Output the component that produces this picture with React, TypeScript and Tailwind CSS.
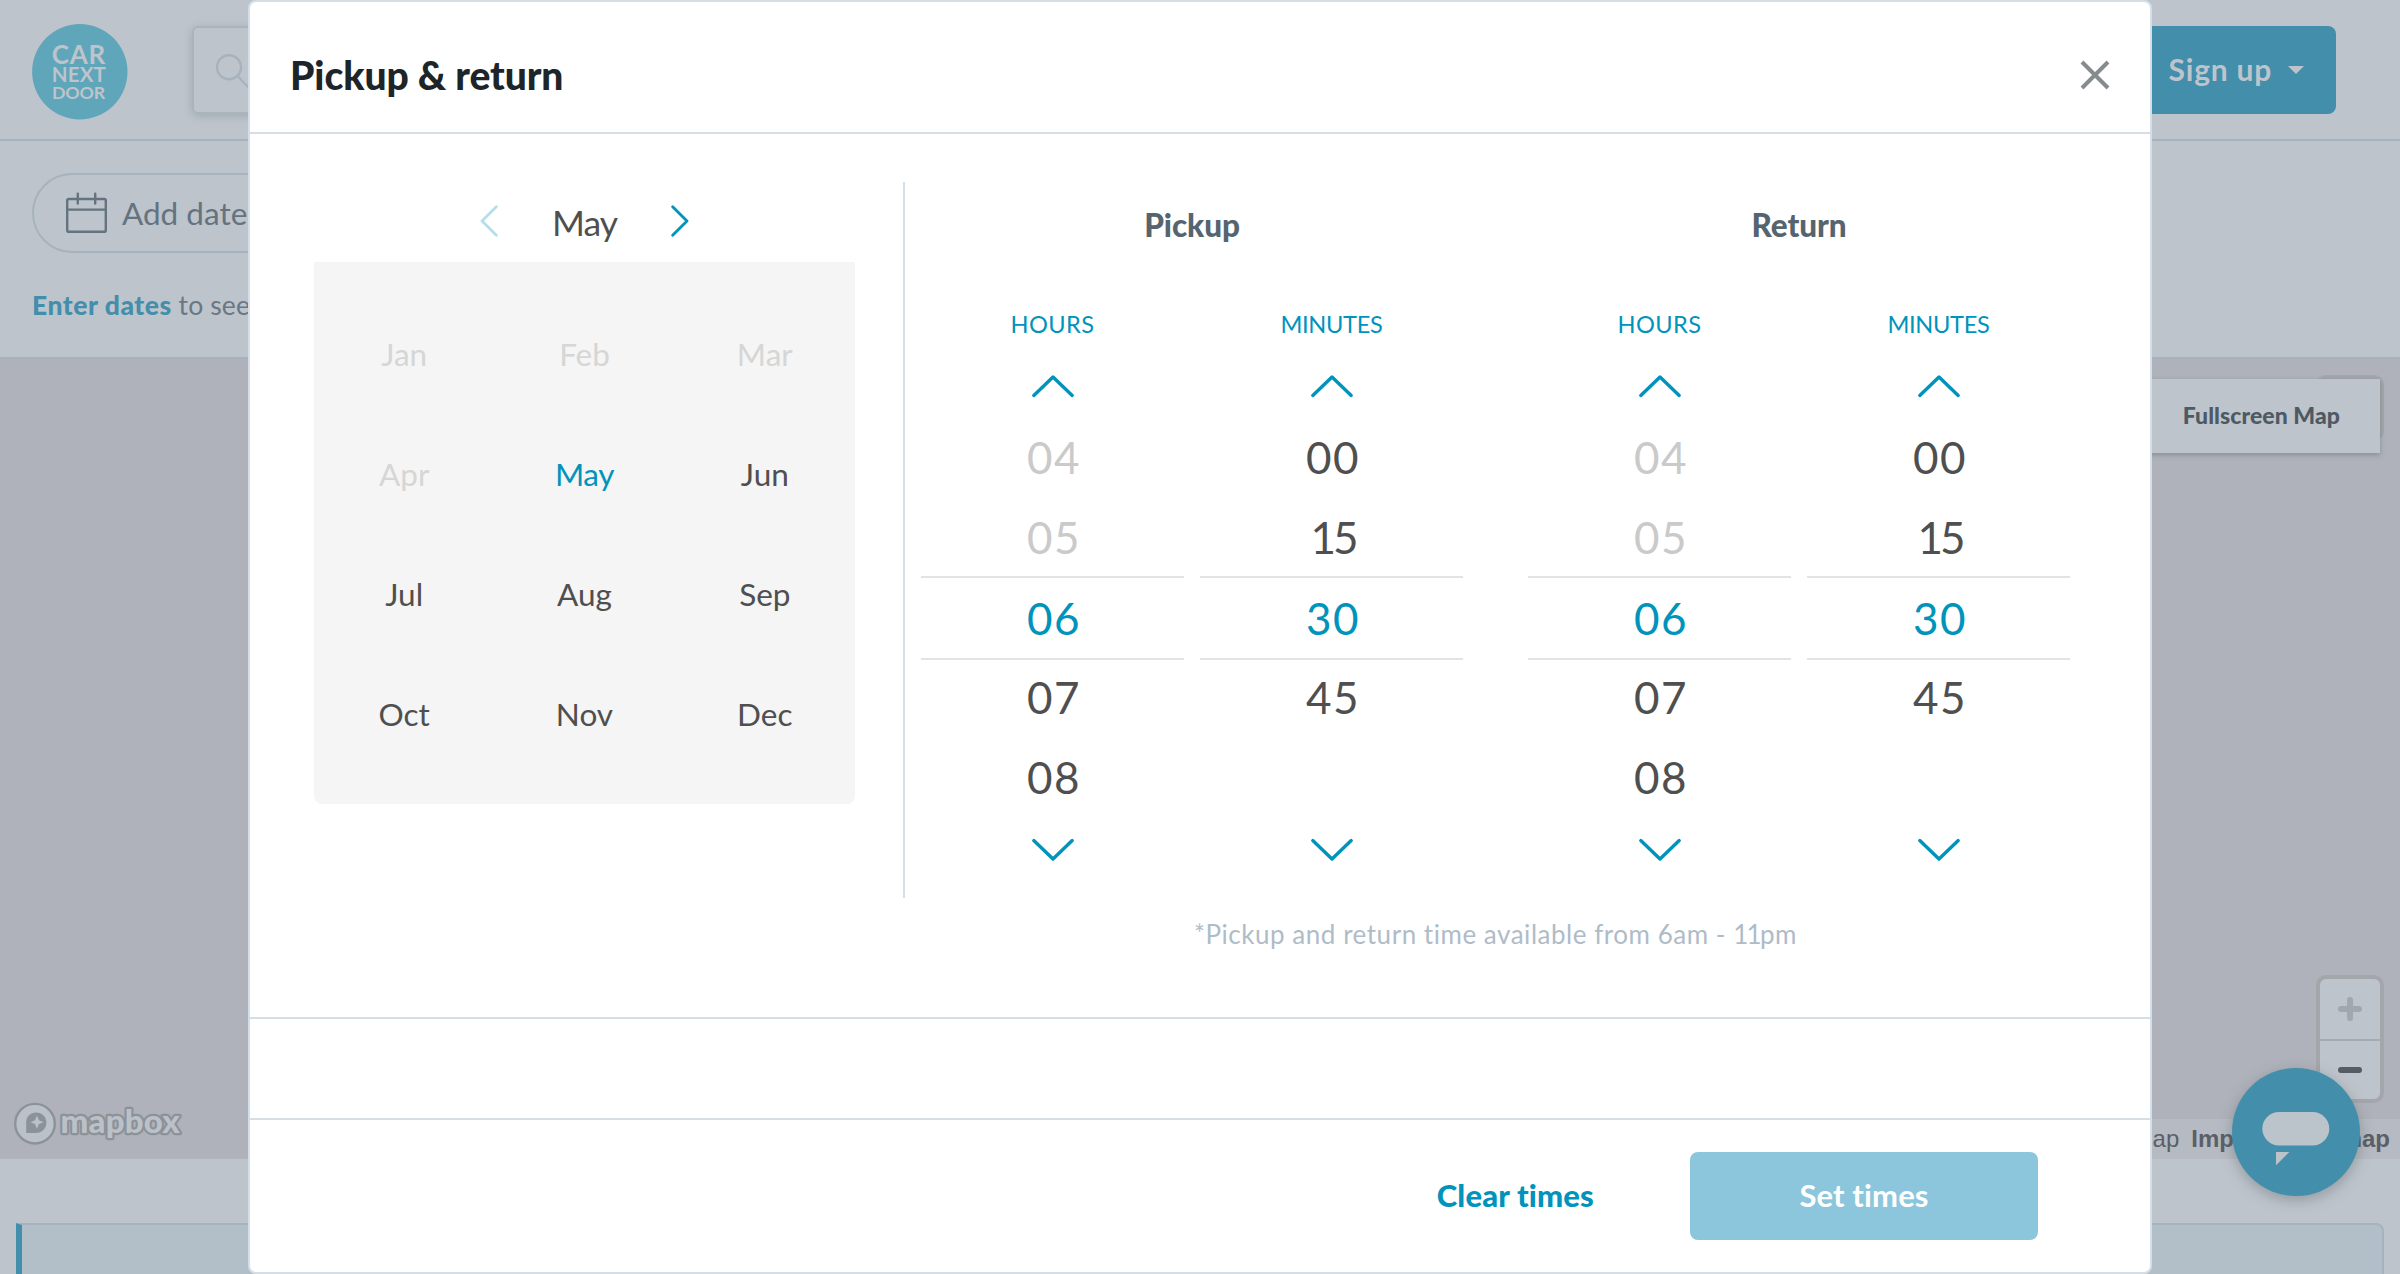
import React from "react";

const MONTHS = ["Jan", "Feb", "Mar", "Apr", "May", "Jun", "Jul", "Aug", "Sep", "Oct", "Nov", "Dec"];
const CURRENT_MONTH = 4;

function Logo() {
  return (
    <svg className="mt-6 h-24 w-24 shrink-0" viewBox="0 0 96 96" fontFamily="Lato, sans-serif" fontWeight="700" fill="#bec4cb">
      <circle cx="47.8" cy="47.8" r="47.7" fill="#5fa6bb" />
      <text x="19.8" y="40" fontSize="26" letterSpacing="0.77">CAR</text>
      <text x="19.8" y="58.4" fontSize="20.5" letterSpacing="0.16">NEXT</text>
      <text x="20" y="75" fontSize="17.8" letterSpacing="-0.2">DOOR</text>
    </svg>
  );
}

function SiteHeader() {
  return (
    <header className="flex h-[141px] items-start border-b-2 border-[#a6b2bd] pr-16 pl-8">
      <Logo />
      <div className="mt-[26px] ml-16 flex h-[88px] w-[900px] rounded-md border-2 border-[#a9b4bf] pt-[26px] pl-[22px] shadow-[0_2px_8px_rgba(90,105,120,0.3)]">
        <svg className="h-9 w-9" viewBox="0 0 36 36" fill="none" stroke="#a6b2bd" strokeWidth="2.4" strokeLinecap="round">
          <circle cx="13" cy="13.2" r="12" />
          <path d="M21.5 22 33 34" />
        </svg>
      </div>
      <button className="mt-[26px] ml-auto flex h-[88px] items-center rounded-lg bg-[#428eab] pr-8 pb-0.5 pl-16 text-[30px] font-bold tracking-[0.77px] text-[#bec4cb]">
        Sign up
        <svg className="mt-0.5 ml-4 h-2 w-4" viewBox="0 0 16 8" fill="currentColor">
          <path d="M0 0h16L8 8z" />
        </svg>
      </button>
    </header>
  );
}

function Filters() {
  return (
    <section className="h-[218px] border-b-2 border-[#a6b2bd] pt-8 pl-8">
      <div className="flex h-20 w-[320px] items-center rounded-full border-2 border-[#a6b2bd] pl-8 text-[31.5px] leading-[40px] text-[#64737f]">
        <svg className="h-[42px] w-[42px]" viewBox="0 0 42 42" fill="none" stroke="currentColor" strokeWidth="2.4" strokeLinecap="round">
          <rect x="1.2" y="7" width="38.6" height="32.8" rx="1.6" />
          <path d="M1.2 17.6h38.6M11.8 1.6v10M29.2 1.6v10" />
        </svg>
        <span className="ml-[14px] whitespace-nowrap">Add dates</span>
      </div>
      <p className="mt-8 text-[26.5px] leading-[40px] tracking-[0.12px] text-[#697884]">
        <span className="font-black tracking-[0.52px] text-[#428eab]">Enter dates</span> to see availability
      </p>
    </section>
  );
}

function MapArea() {
  return (
    <section className="relative h-[800px] bg-[#afb2ba]">
      <div className="absolute top-4 right-4 h-[66px] w-[68px] rounded-[10px] bg-[#a3a7ac]" />
      <button className="absolute top-5 right-5 flex h-[74px] w-[300px] items-center justify-end bg-[#bec4cb] pr-10 pb-0.5 text-[23px] font-black tracking-[0.06px] text-[#4e5963] shadow-[0_2px_5px_rgba(80,90,95,0.4)]">
        Fullscreen Map
      </button>
      <div className="absolute top-[616px] right-4 flex h-32 w-[68px] flex-col rounded-[10px] border-4 border-[#a3a7ac] bg-[#bec4cb]">
        <div className="flex h-[62px] items-center justify-center border-b-2 border-[#a6abb2]">
          <svg className="h-6 w-6" viewBox="0 0 24 24" stroke="#a1a7ad" strokeWidth="6" strokeLinecap="round">
            <path d="M12 3v18M3 12h18" />
          </svg>
        </div>
        <div className="flex h-[58px] items-center justify-center">
          <div className="h-1.5 w-6 rounded-full bg-[#545c64]" />
        </div>
      </div>
      <svg className="absolute top-[740px] left-3.5 h-12 w-[172px]" viewBox="0 0 172 48">
        <circle cx="21" cy="24.7" r="19.8" fill="#bbc1c9" stroke="#8d9198" strokeWidth="2.4" />
        <path d="M12.2 34V23.2c0-6 4.4-9.8 10-9.8s10.2 4.4 10.2 10c0 6-4.6 10.5-10.6 10.5z" fill="#8d9198" />
        <path d="m23 16.6 1.9 4.6 4.7 2-4.7 1.900-1.900 4.700-2-4.700-4.600-1.900 4.600-2z" fill="#bbc1c9" />
        <text
          x="46.5"
          y="33.6"
          fontFamily="Lato, sans-serif"
          fontSize="33"
          fontWeight="900"
          letterSpacing="0.2"
          fill="#bbc1c9"
          stroke="#8d9198"
          strokeWidth="4.4"
          strokeLinejoin="round"
          paintOrder="stroke"
        >
          mapbox
        </text>
      </svg>
      <div className="absolute right-0 bottom-0 flex h-10 items-center gap-3 bg-[#b6bac2] pr-[10px] pl-3 font-['Liberation_Sans',Arial,sans-serif] text-2xl whitespace-nowrap text-[#5b5f67]">
        <span>© Mapbox</span>
        <span>© OpenStreetMap</span>
        <span className="font-bold">Improve this map</span>
      </div>
    </section>
  );
}

function ChatButton() {
  return (
    <button className="absolute top-[1068px] left-[2232px] h-32 w-32 rounded-full bg-[#438fab] shadow-[0_4px_14px_rgba(80,90,95,0.4)]">
      <svg className="h-32 w-32" viewBox="0 0 128 128" fill="#bcc4cb">
        <rect x="30.3" y="44" width="67" height="33.4" rx="16.7" />
        <path d="M44 84h13.3L44 97.3z" />
      </svg>
    </button>
  );
}

type Direction = "up" | "down";

function Arrow({ dir }: { dir: Direction }) {
  return (
    <button className="flex h-10 items-center justify-center">
      <svg className="h-6 w-[44px]" viewBox="0 0 44 24" fill="none" stroke="#0093bb" strokeWidth="3.4" strokeLinecap="round" strokeLinejoin="round">
        <path d={dir === "up" ? "M2.8 21.4 22 3l19.2 18.4" : "M2.8 2.6 22 21 41.2 2.6"} />
      </svg>
    </button>
  );
}

type Tone = "off" | "on" | "picked";
type Slot = { label: string; tone: Tone };

const HOURS: Slot[] = [
  { label: "04", tone: "off" },
  { label: "05", tone: "off" },
  { label: "06", tone: "picked" },
  { label: "07", tone: "on" },
  { label: "08", tone: "on" },
];

const MINUTES: Slot[] = [
  { label: "00", tone: "on" },
  { label: "15", tone: "on" },
  { label: "30", tone: "picked" },
  { label: "45", tone: "on" },
];

const SLOT_CLASS: Record<Tone, string> = {
  off: "h-20 pt-0.5 text-[#cacaca]",
  on: "h-20 pt-0.5 text-[#4f4f4f]",
  picked: "-mb-1 h-[84px] border-y-2 border-[#e3e3e3] pb-px text-[#0093bb]",
};

function Wheel({ title, slots }: { title: string; slots: Slot[] }) {
  return (
    <div className="flex w-[263px] flex-col">
      <div
        className={`text-center text-[23.6px] leading-[40px] text-[#0093bb] ${
          title === "HOURS" ? "tracking-[0.44px]" : "tracking-[-0.31px]"
        }`}
      >
        {title}
      </div>
      <div className="mt-[22px] flex flex-col">
        <Arrow dir="up" />
      </div>
      <ul className="mt-[10px] h-[400px]">
        {slots.map((s) => (
          <li
            key={s.label}
            className={`flex items-center justify-center pl-[3px] text-[44px] leading-none ${
              s.label.startsWith("1") ? "tracking-[-3px]" : "tracking-[1.6px]"
            } ${SLOT_CLASS[s.tone]}`}
          >
            {s.label}
          </li>
        ))}
      </ul>
      <div className="mt-[14px] flex flex-col">
        <Arrow dir="down" />
      </div>
    </div>
  );
}

function TimePicker({ title }: { title: string }) {
  return (
    <div className="w-[542px]">
      <h3 className="flex h-[84px] items-center justify-center pt-[3px] text-[31.5px] font-black tracking-[-0.1px] text-[#56646f]">{title}</h3>
      <div className="mt-[38px] flex gap-4">
        <Wheel title="HOURS" slots={HOURS} />
        <Wheel title="MINUTES" slots={MINUTES} />
      </div>
    </div>
  );
}

function MonthPicker() {
  return (
    <div className="w-[541px]">
      <div className="flex h-20 items-center justify-center pb-0.5">
        <svg className="h-8 w-[18px]" viewBox="0 0 18 32" fill="none" stroke="#b2dfeb" strokeWidth="2.8" strokeLinecap="round" strokeLinejoin="round">
          <path d="M16.3 1.8 2 16l14.3 14.2" />
        </svg>
        <span className="w-[173px] pt-[3px] text-center text-[35.5px] leading-[48px] tracking-[-0.9px] text-[#4f4f4f]">May</span>
        <svg className="h-8 w-[18px]" viewBox="0 0 18 32" fill="none" stroke="#0093bb" strokeWidth="2.8" strokeLinecap="round" strokeLinejoin="round">
          <path d="M1.7 1.8 16 16 1.7 30.2" />
        </svg>
      </div>
      <div className="grid h-[542px] auto-rows-[120px] grid-cols-3 rounded-b-lg bg-[#f5f5f5] pt-[33px]">
        {MONTHS.map((m, i) => (
          <div
            key={m}
            className={`flex items-center justify-center text-[31.5px] ${
              i < CURRENT_MONTH ? "text-[#d6d6d6]" : i === CURRENT_MONTH ? "tracking-[-0.5px] text-[#0093bb]" : "text-[#4f4f4f]"
            }`}
          >
            {m}
          </div>
        ))}
      </div>
    </div>
  );
}

function Dialog() {
  return (
    <div role="dialog" className="absolute top-0 left-[248px] flex h-[1274px] w-[1904px] flex-col rounded-lg border-2 border-[#d3dee6] bg-white">
      <div className="flex h-[132px] shrink-0 items-center justify-between border-b-2 border-[#d3dee6] pt-[14px] pr-[39px] pl-10">
        <h2 className="pt-0.5 text-[39px] leading-[48px] font-black tracking-[-0.08px] text-[#1d2529]">Pickup &amp; return</h2>
        <svg className="mt-0.5 h-8 w-8" viewBox="0 0 32 32" stroke="#868b8e" strokeWidth="4">
          <path d="M3 3l26 26M29 3 3 29" />
        </svg>
      </div>
      <div className="h-[885px] shrink-0 border-b-2 border-[#d3dee6] pt-12">
        <div className="flex h-[716px]">
          <div className="w-[653px] pl-16">
            <MonthPicker />
          </div>
          <div className="flex gap-[65px] border-l-2 border-[#d3dee6] pl-4">
            <TimePicker title="Pickup" />
            <TimePicker title="Return" />
          </div>
        </div>
        <p className="mt-4 ml-[671px] w-[1149px] text-center text-[26px] leading-[40px] tracking-[0.53px] text-[#afbcc8]">
          *Pickup and return time available from 6am - <span className="tracking-[-1.7px]">11</span>pm
        </p>
      </div>
      <div className="h-[101px] shrink-0 border-b-2 border-[#d3dee6]" />
      <div className="flex grow items-center justify-end gap-24 pr-28">
        <button className="pb-px text-[31px] font-black tracking-[0.16px] text-[#0093bb]">Clear times</button>
        <button className="h-[88px] w-[348px] rounded-lg bg-[#8cc6dd] pb-px text-[31px] font-bold tracking-[0.14px] text-white">Set times</button>
      </div>
    </div>
  );
}

export default function App() {
  return (
    <div className="relative h-[1274px] w-[2400px] overflow-hidden bg-[#bec4cb] font-[Lato,sans-serif]">
      <SiteHeader />
      <Filters />
      <MapArea />
      <div className="mx-4 mt-16 h-40 rounded-r-lg border-2 border-l-[6px] border-[#a6b2bd] border-l-[#428eab] bg-[#b2bfc8]" />
      <ChatButton />
      <Dialog />
    </div>
  );
}
